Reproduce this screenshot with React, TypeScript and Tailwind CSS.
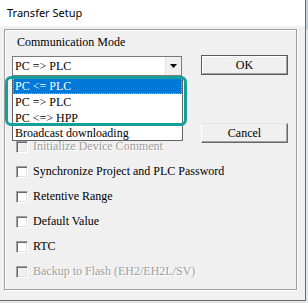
import React from "react";

const serif = "font-['Liberation_Serif','Times_New_Roman',serif] text-[12px]";

const options = [
  { label: "PC <= PLC", active: true, h: "h-4" },
  { label: "PC => PLC", active: false, h: "h-4" },
  { label: "PC <=> HPP", active: false, h: "h-[15px]" },
  { label: "Broadcast downloading", active: false, h: "h-[15px]" },
];

const checks = [
  { label: "Initialize Device Comment", disabled: true },
  { label: "Synchronize Project and PLC Password", disabled: false },
  { label: "Retentive Range", disabled: false },
  { label: "Default Value", disabled: false },
  { label: "RTC", disabled: false },
  { label: "Backup to Flash (EH2/EH2L/SV)", disabled: true },
];

const CheckRow: React.FC<{ label: string; disabled: boolean }> = ({ label, disabled }) => (
  <div className="flex h-[13px] items-center gap-[5px]">
    <span
      className={`block h-3 w-3 shrink-0 border border-t-[#a0a0a0] border-l-[#a0a0a0] border-b-white border-r-white shadow-[inset_1px_1px_0_#696969,inset_-1px_-1px_0_#e3e3e3] ${
        disabled ? "bg-[#f0f0f0]" : "bg-white"
      }`}
    />
    <span
      className={`whitespace-nowrap leading-[13px] ${
        disabled ? "text-[#a0a0a0] [text-shadow:1px_1px_0_#fff]" : "text-black"
      }`}
    >
      {label}
    </span>
  </div>
);

export default function App() {
  return (
    <div className={`relative h-[303px] w-[308px] overflow-hidden bg-[#e4e6e9] ${serif}`}>
      {/* bit of desktop at the right edge */}
      <div className="absolute right-0 top-0 h-[30px] w-[2px] bg-[#c3d3e2]" />

      <div className="h-[301px] w-[306px] border-b border-r border-[#6b6b6b] bg-[#f0f0f0]">
        <div className="flex h-[26px] items-center bg-white pl-[7px] font-['Noto_Sans','Segoe_UI',sans-serif] text-[11px] text-black">
          Transfer Setup
        </div>

        {/* Communication Mode group */}
        <div className="ml-[4px] mt-[3px] flex h-[261px] w-[293px] border border-[#a0a0a0] shadow-[inset_1px_1px_0_#fff,1px_1px_0_#fff]">
          <div className="ml-[7px] flex w-[170px] flex-col">
            <div className="mt-[5px] h-[15px] whitespace-nowrap pl-[5px] leading-[15px] text-black">
              Communication Mode
            </div>

            <div className="relative mt-[6px] flex h-5 w-[170px] border border-[#7a7a7a] bg-white">
              <span className="flex-1 pl-[2px] leading-[18px] text-black">PC =&gt; PLC</span>
              <span className="flex w-[16px] items-center justify-center border-l border-[#e3e3e3] bg-[#f0f0f0]">
                <svg width="7" height="4" viewBox="0 0 7 4">
                  <polygon points="0,0 7,0 3.5,4" fill="#000" />
                </svg>
              </span>

              {/* open list */}
              <div className="absolute left-[-1px] top-[19px] z-10 w-[171px] border border-[#646464] bg-white pt-[1px]">
                {options.map((o) => (
                  <div
                    key={o.label}
                    className={`flex items-center whitespace-nowrap border pl-[1px] leading-[14px] ${o.h} ${
                      o.active
                        ? "border-dotted border-[#f2a33a] bg-[#0078d7] text-white"
                        : "border-transparent text-black"
                    }`}
                  >
                    {o.label}
                  </div>
                ))}
              </div>
            </div>

            <div className="ml-[4px] mt-[64px] flex flex-col gap-3">
              {checks.map((c) => (
                <CheckRow key={c.label} label={c.label} disabled={c.disabled} />
              ))}
            </div>
          </div>

          <div className="ml-[19px] flex w-[87px] flex-col">
            <button className="mt-[25px] h-5 w-[87px] border border-[#5a5a5a] bg-[#f0f0f0] p-0 text-black">
              <span className="flex h-full w-full items-center justify-center border-b border-r border-t border-l border-b-[#a0a0a0] border-r-[#a0a0a0] border-t-white border-l-white leading-[14px]">
                OK
              </span>
            </button>
            <button className="mt-[48px] flex h-5 w-[87px] items-center justify-center border border-b-[#696969] border-r-[#696969] border-t-[#e3e3e3] border-l-white bg-[#f0f0f0] leading-[14px] text-black shadow-[inset_-1px_-1px_0_#a0a0a0]">
              Cancel
            </button>
          </div>
        </div>
      </div>

      {/* teal annotation around the open list */}
      <div className="pointer-events-none absolute left-[5px] top-[76px] z-20 h-[50px] w-[182px] rounded-[6px] border-[3px] border-[#14a09a]" />
    </div>
  );
}
